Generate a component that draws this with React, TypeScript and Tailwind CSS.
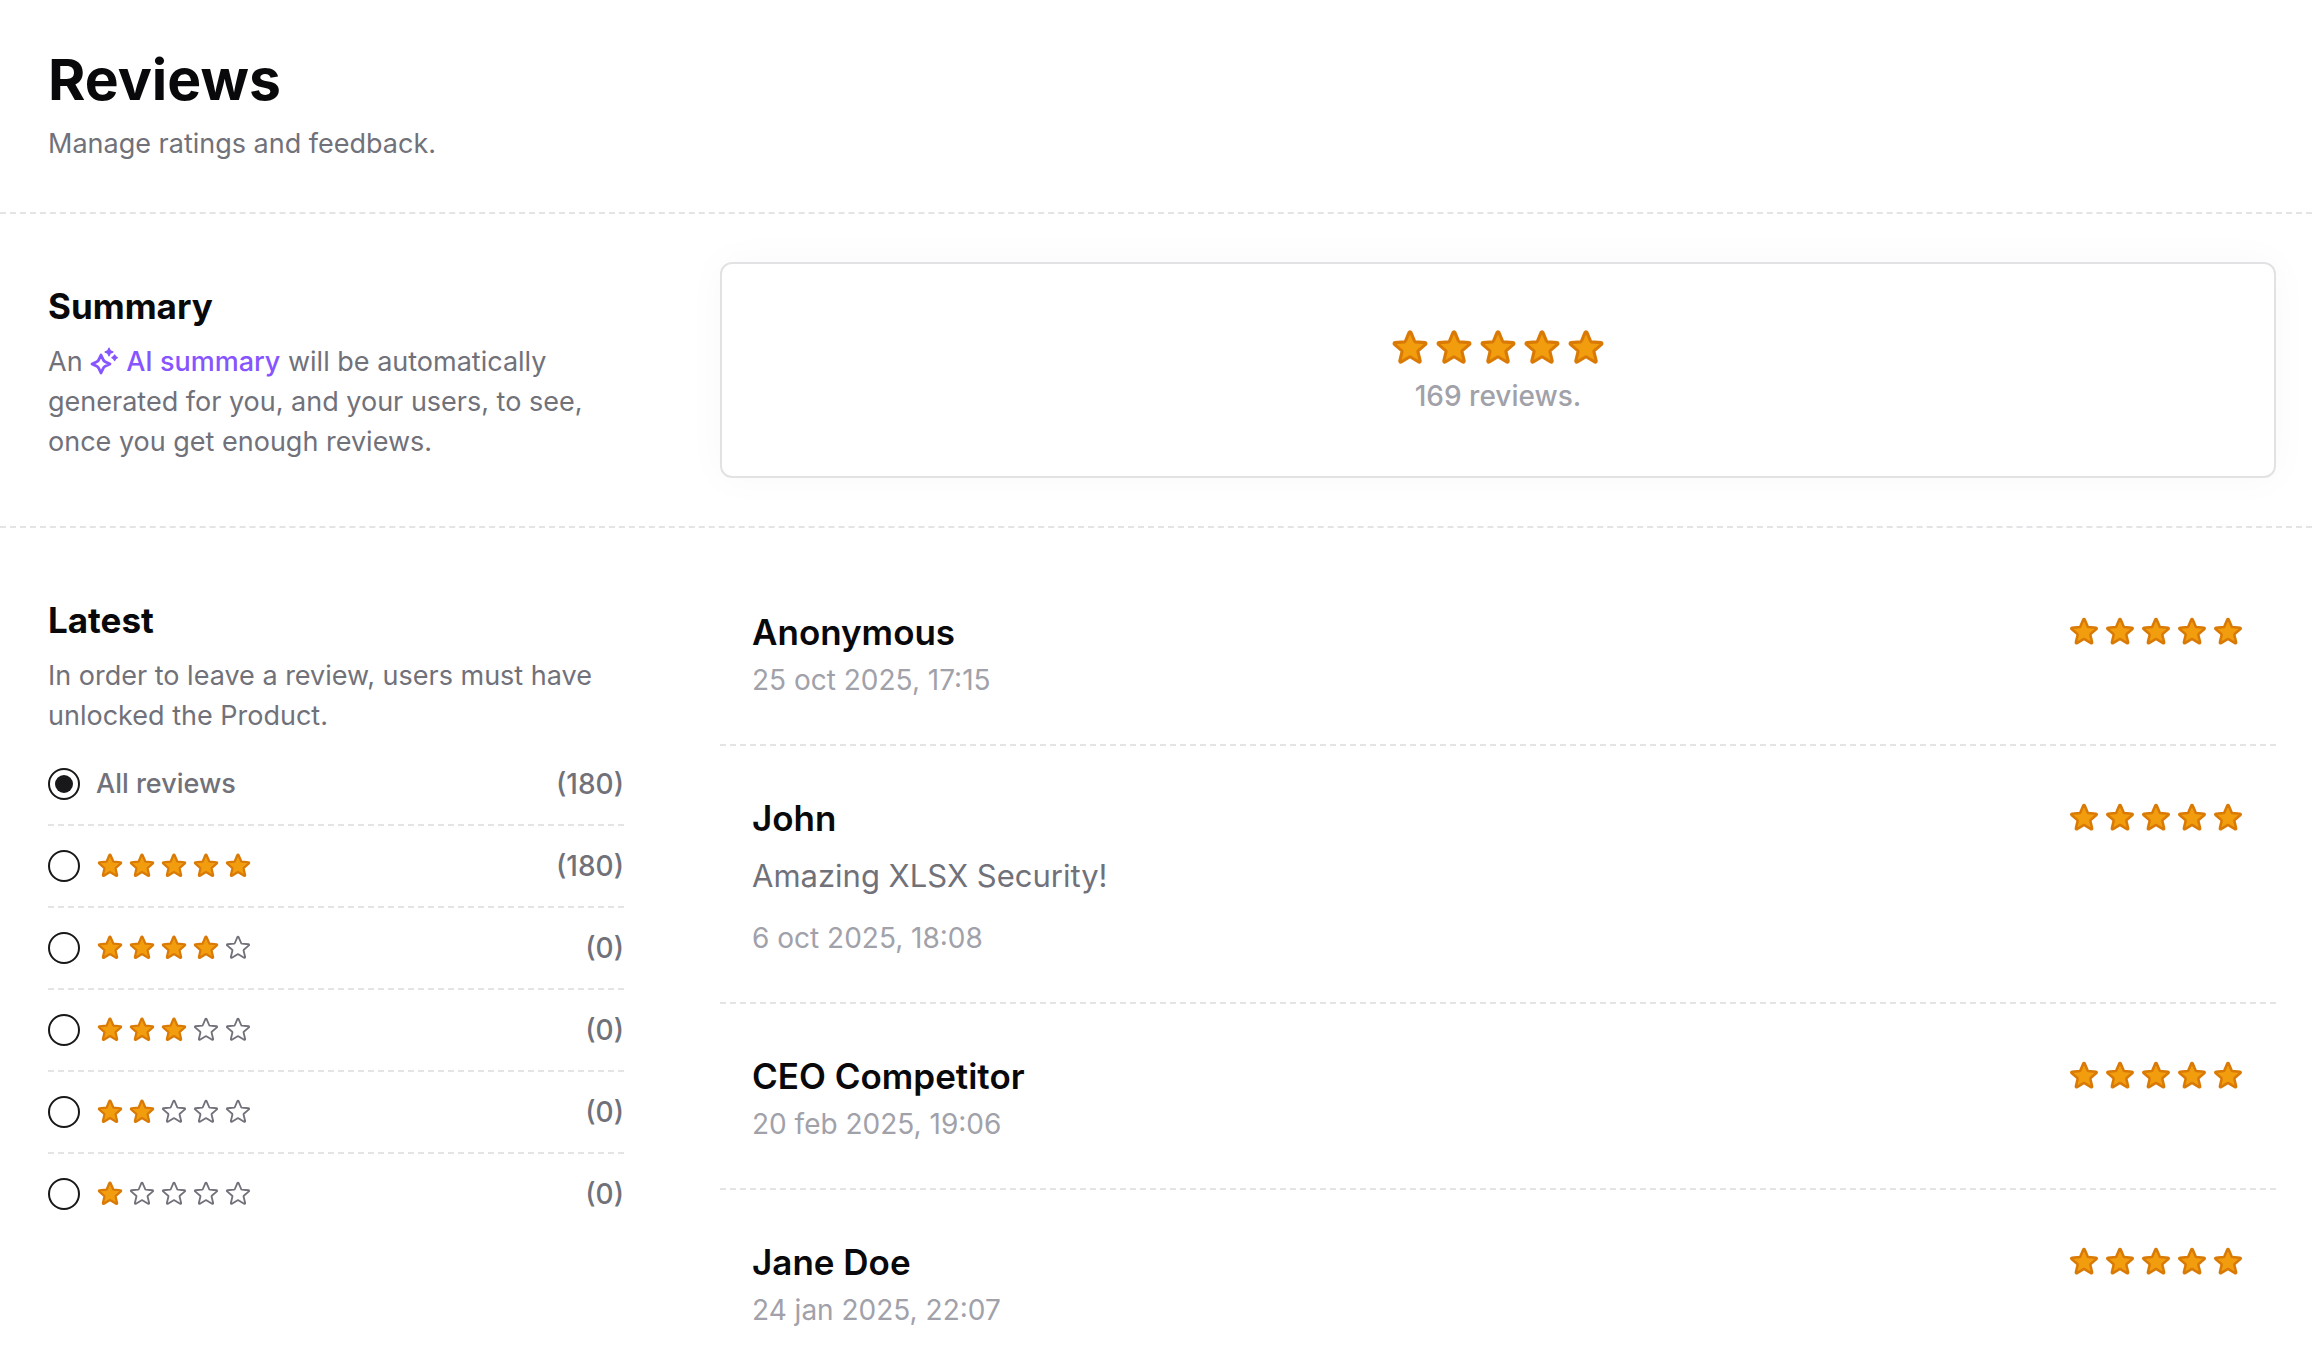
import React, { useState } from 'react';

type Review = { name: string; text?: string; date: string };

const reviews: Review[] = [
  { name: 'Anonymous', date: '25 oct 2025, 17:15' },
  { name: 'John', text: 'Amazing XLSX Security!', date: '6 oct 2025, 18:08' },
  { name: 'CEO Competitor', date: '20 feb 2025, 19:06' },
  { name: 'Jane Doe', date: '24 jan 2025, 22:07' },
];

// stars: 0 stands for "All reviews"
const filters = [
  { stars: 0, count: 180 },
  { stars: 5, count: 180 },
  { stars: 4, count: 0 },
  { stars: 3, count: 0 },
  { stars: 2, count: 0 },
  { stars: 1, count: 0 },
];

const starSizes = {
  sm: 'size-7',
  md: 'size-8',
  lg: 'size-10',
};

const Stars: React.FC<{ value: number; size: 'sm' | 'md' | 'lg' }> = ({ value, size }) => (
  <span role="img" aria-label={`${value} out of 5 stars`} className="flex shrink-0 gap-1">
    {[1, 2, 3, 4, 5].map((n) => (
      <svg
        key={n}
        viewBox="0.5 1 23 23"
        strokeWidth={n <= value ? 1.8 : 1.5}
        strokeLinecap="round"
        strokeLinejoin="round"
        className={`${starSizes[size]} ${n <= value ? 'fill-[#f29d0e] stroke-[#d97a06]' : 'fill-none stroke-[#71717a]'}`}
      >
        <path d="M11.48 3.499a.562.562 0 0 1 1.04 0l2.125 5.111a.563.563 0 0 0 .475.345l5.518.442c.499.04.701.663.321.988l-4.204 3.602a.563.563 0 0 0-.182.557l1.285 5.385a.562.562 0 0 1-.84.61l-4.725-2.885a.562.562 0 0 0-.586 0L6.982 20.54a.562.562 0 0 1-.84-.61l1.285-5.386a.562.562 0 0 0-.182-.557l-4.204-3.602a.562.562 0 0 1 .321-.988l5.518-.442a.563.563 0 0 0 .475-.345L11.48 3.5Z" />
      </svg>
    ))}
  </span>
);

const SparklesIcon: React.FC = () => (
  <svg
    viewBox="0 0 28 28"
    className="mr-2 inline size-7 align-[-4px]"
    fill="currentColor"
    stroke="currentColor"
    strokeLinejoin="round"
  >
    <path
      fill="none"
      strokeWidth="2.8"
      d="M11 8L13.200 12.600Q13.800 14 15.200 14.700L20 17L15.200 19.300Q13.800 20 13.200 21.400L11 26L8.800 21.400Q8.200 20 6.800 19.300L2 17L6.800 14.700Q8.200 14 8.800 12.600Z"
    />
    <path strokeWidth="1.4" d="M19 1.200L20.200 3.800L22.800 5L20.200 6.200L19 8.800L17.800 6.200L15.200 5L17.800 3.800Z" />
    <path strokeWidth="1.4" d="M24.600 8L25.600 9.700L27.200 10.700L25.600 11.700L24.600 13.400L23.600 11.700L22 10.700L23.600 9.700Z" />
  </svg>
);

const ReviewItem: React.FC<{ review: Review }> = ({ review }) => (
  <article className="flex items-start justify-between gap-8 border-b-2 border-dashed border-[#e4e4e7] px-8 pt-13 pb-11 last:border-b-0">
    <div>
      <h3 className="text-[35px]/10 font-semibold text-[#09090b]">{review.name}</h3>
      {review.text && <p className="mt-4 mb-5 text-[31px]/11">{review.text}</p>}
      <time className="mt-2 block text-[28px]/10 text-[#a1a1aa]">{review.date}</time>
    </div>
    <div className="pt-1">
      <Stars value={5} size="md" />
    </div>
  </article>
);

export default function App() {
  const [selected, setSelected] = useState(0);

  return (
    <main className="min-h-screen bg-white font-['Inter',sans-serif] text-[27px]/10 text-[#71717a]">
      <header className="border-b-2 border-dashed border-[#e4e4e7] p-12">
        <h1 className="text-[57px]/16 font-bold text-[#09090b]">Reviews</h1>
        <p className="mt-3">Manage ratings and feedback.</p>
      </header>

      <section className="flex gap-24 border-b-2 border-dashed border-[#e4e4e7] py-12 pr-9 pl-12">
        <div className="w-[576px] shrink-0 pt-6">
          <h2 className="text-[35px]/10 font-bold text-[#09090b]">Summary</h2>
          <p className="mt-4">
            An{' '}
            <span className="font-medium text-[#8655ff]">
              <SparklesIcon />
              AI summary
            </span>{' '}
            will be automatically generated for you, and your users, to see, once you get enough reviews.
          </p>
        </div>
        <div className="flex flex-1 flex-col items-center gap-2 self-start rounded-xl border-2 border-[#e2e2e4] pt-16 pb-15 shadow-[0_0_40px_rgba(0,0,0,0.03)]">
          <Stars value={5} size="lg" />
          <p className="text-[28px]/10 font-medium text-[#a1a1aa]">169 reviews.</p>
        </div>
      </section>

      <section className="flex gap-24 pt-8 pr-9 pb-8 pl-12">
        <div className="w-[576px] shrink-0 pt-10">
          <h2 className="text-[35px]/10 font-bold text-[#09090b]">Latest</h2>
          <p className="mt-4">In order to leave a review, users must have unlocked the Product.</p>
          <fieldset className="mt-2">
            {filters.map((filter) => (
              <label
                key={filter.stars}
                className="flex items-center gap-4 border-b-2 border-dashed border-[#e4e4e7] py-5 font-medium last:border-b-0"
              >
                <input
                  type="radio"
                  name="rating"
                  checked={selected === filter.stars}
                  onChange={() => setSelected(filter.stars)}
                  className="size-8 shrink-0 appearance-none rounded-full border-2 border-[#18181b] bg-white bg-clip-content p-[5px] checked:bg-[#18181b]"
                />
                {filter.stars ? <Stars value={filter.stars} size="sm" /> : <span>All reviews</span>}
                <span className="ml-auto text-[28px]/10">({filter.count})</span>
              </label>
            ))}
          </fieldset>
        </div>
        <div className="flex-1">
          {reviews.map((review) => (
            <ReviewItem key={review.name} review={review} />
          ))}
        </div>
      </section>
    </main>
  );
}
